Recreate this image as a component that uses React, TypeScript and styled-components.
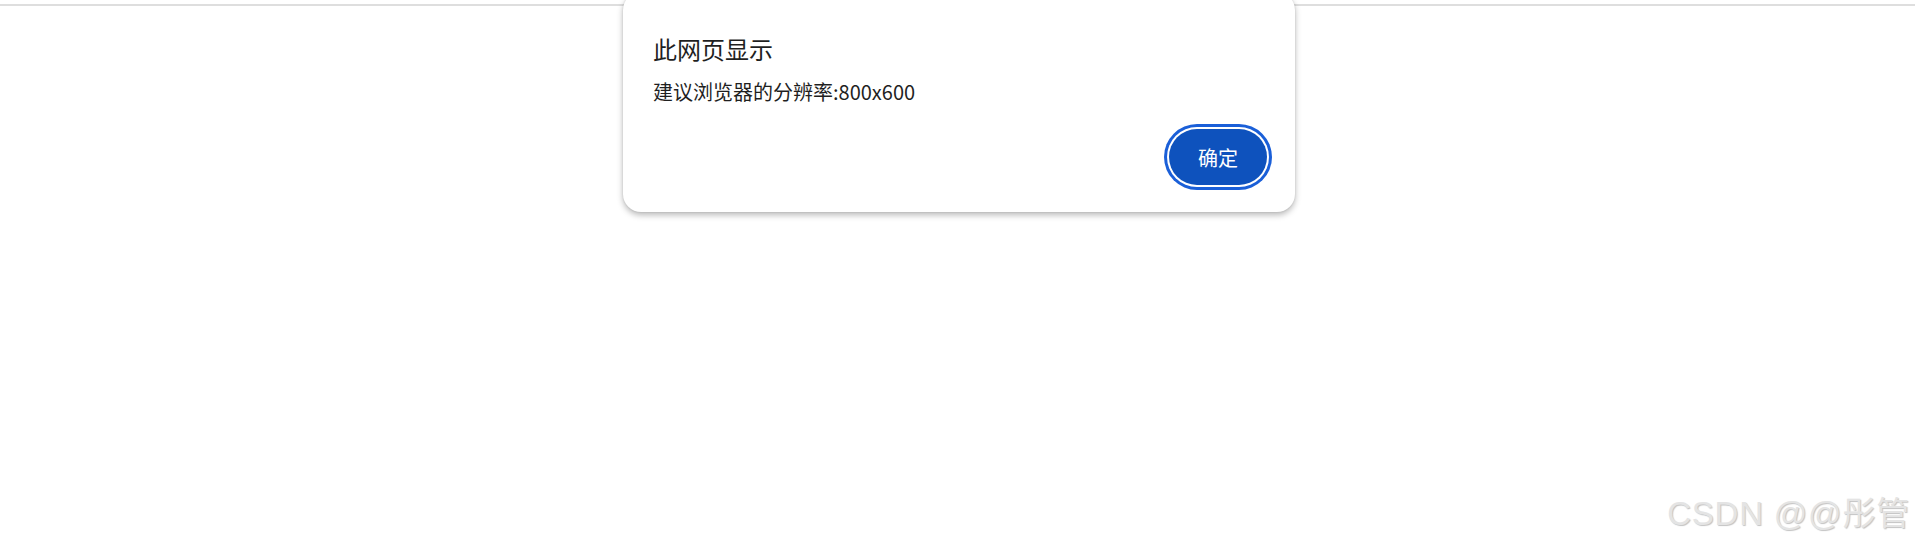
import React from 'react';
import styled, { createGlobalStyle } from 'styled-components';

const GlobalStyle = createGlobalStyle`
    html, body {
        margin: 0;
        padding: 0;
        background: #ffffff;
        font-family: "Noto Sans CJK SC", "Noto Sans", sans-serif;
    }
`;

const Page = styled.div`
    width: 100vw;
    height: 100vh;
    overflow: hidden;
    position: relative;
`;

const TopRule = styled.div`
    margin-top: 4px;
    height: 2px;
    background: #dedede;
`;

const Dialog = styled.div`
    position: absolute;
    top: -8px;
    left: 623px;
    width: 672px;
    box-sizing: border-box;
    padding: 41px 28px 27px 30px;
    background: #ffffff;
    border-radius: 18px;
    box-shadow: 0 3px 6px rgba(0, 0, 0, 0.28), 0 0 2px rgba(0, 0, 0, 0.12);
    display: flex;
    flex-direction: column;
`;

const Title = styled.div`
    font-size: 24px;
    line-height: 32px;
    color: #1f1f1f;
`;

const Message = styled.div`
    margin-top: 13px;
    font-size: 20px;
    line-height: 28px;
    color: #1f1f1f;
`;

const Actions = styled.div`
    margin-top: 23px;
    display: flex;
    justify-content: flex-end;
`;

const OkButton = styled.button`
    width: 98px;
    height: 56px;
    border: none;
    border-radius: 28px;
    background: #0e52bd;
    color: #ffffff;
    font-family: "Noto Sans CJK SC", sans-serif;
    font-size: 20px;
    box-shadow: 0 0 0 2px #ffffff, 0 0 0 5px #1a5fd8;
    cursor: pointer;
`;

const Watermark = styled.div`
    position: absolute;
    right: 5px;
    bottom: 14px;
    font-family: "Liberation Sans", "Noto Sans CJK SC", sans-serif;
    font-size: 33px;
    line-height: 36px;
    letter-spacing: 0.8px;
    color: #e4e4e4;
    text-shadow: 1px 1px 1px rgba(0, 0, 0, 0.24), -1px -1px 0 #ffffff;
    white-space: nowrap;
`;

export default function App() {
    return (
        <Page>
            <GlobalStyle />
            <TopRule />
            <Dialog>
                <Title>此网页显示</Title>
                <Message>建议浏览器的分辨率:800x600</Message>
                <Actions>
                    <OkButton>确定</OkButton>
                </Actions>
            </Dialog>
            <Watermark>CSDN @@彤管</Watermark>
        </Page>
    );
}
